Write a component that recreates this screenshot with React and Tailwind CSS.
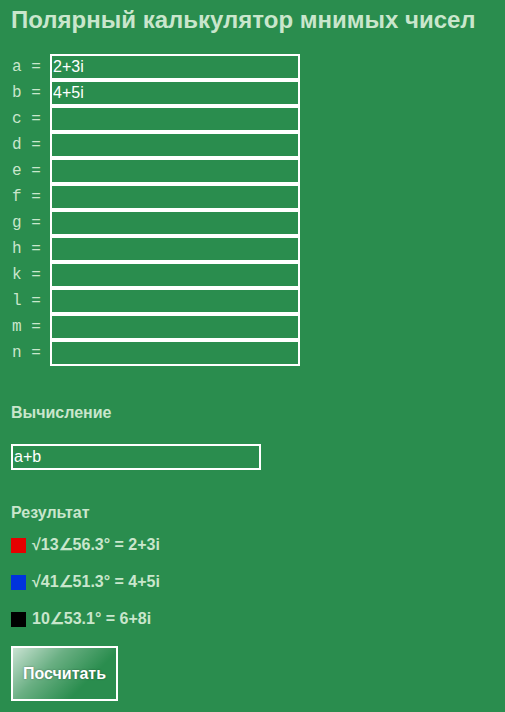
const VARS = ["a", "b", "c", "d", "e", "f", "g", "h", "k", "l", "m", "n"];

const INITIAL = { a: "2+3i", b: "4+5i" };

const RESULTS = [
  { color: "bg-[#e60000]", text: "√13∠56.3° = 2+3i" },
  { color: "bg-[#0033dd]", text: "√41∠51.3° = 4+5i" },
  { color: "bg-black", text: "10∠53.1° = 6+8i" },
];

export default function App() {
  return (
    <div className="min-h-screen bg-[#2a8d4e] px-[11px] pt-[6px] pb-4 font-['Liberation_Sans',Arial,sans-serif] text-[#c9e6cc]">
      <h1 className="text-[24px] font-bold leading-[28px]">Полярный калькулятор мнимых чисел</h1>

      <div className="mt-[20px] flex flex-col">
        {VARS.map((v) => (
          <div key={v} className="flex h-[26px] items-center">
            <span className="w-[39px] pl-[1px] font-['Liberation_Mono','Courier_New',monospace] text-[16px] whitespace-pre">
              {v} =
            </span>
            <input
              defaultValue={INITIAL[v] || ""}
              className="h-[26px] w-[250px] border-2 border-white bg-transparent px-[1px] text-[16px] text-white outline-none"
            />
          </div>
        ))}
      </div>

      <h2 className="mt-[38px] text-[16px] font-bold leading-[18px]">Вычисление</h2>
      <input
        defaultValue="a+b"
        className="mt-[22px] block h-[26px] w-[250px] border-2 border-white bg-transparent px-[1px] text-[16px] text-white outline-none"
      />

      <h2 className="mt-[34px] text-[16px] font-bold leading-[18px]">Результат</h2>
      <div className="mt-[15px] flex flex-col gap-[21px]">
        {RESULTS.map((r) => (
          <div key={r.text} className="flex h-[16px] items-center gap-[6px] text-[16px] font-bold">
            <span className={`h-[15px] w-[15px] shrink-0 ${r.color}`} />
            <span>{r.text}</span>
          </div>
        ))}
      </div>

      <button
        type="button"
        className="mt-[19px] h-[55px] w-[107px] border-2 border-white bg-[linear-gradient(135deg,rgba(255,255,255,0.75)_0%,rgba(255,255,255,0.3)_35%,rgba(255,255,255,0)_70%)] text-[16px] font-bold text-white [text-shadow:0_0_2px_rgba(0,0,0,0.4)]"
      >
        Посчитать
      </button>
    </div>
  );
}
